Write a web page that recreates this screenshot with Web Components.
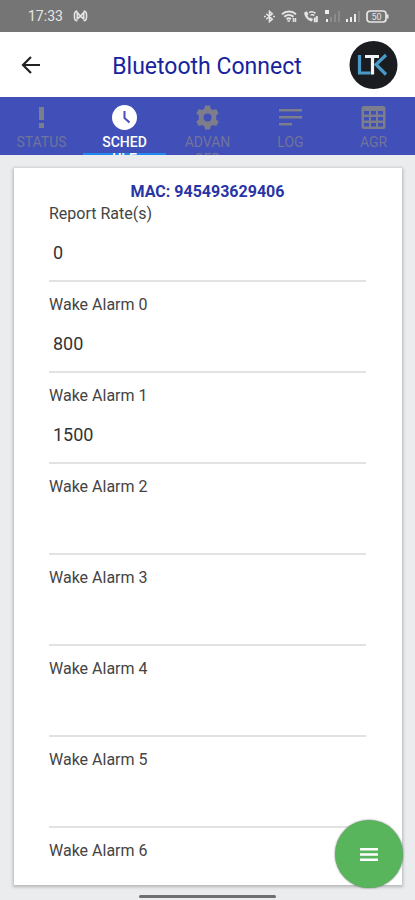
<!DOCTYPE html>
<html lang="en">
<head>
<meta charset="utf-8">
<meta name="viewport" content="width=device-width, initial-scale=1">
<title>Bluetooth Connect</title>
<style>
  html, body { height: 100%; margin: 0; }
  body { font-family: Roboto, "Liberation Sans", sans-serif; background: #ebeced; color: #333; }
</style>
</head>
<body>
<connect-app></connect-app>

<script>
const define = (name, html, setup) => customElements.define(name, class extends HTMLElement {
  constructor() {
    super();
    const t = document.createElement('template');
    t.innerHTML = html;
    this.attachShadow({ mode: 'open' }).append(t.content.cloneNode(true));
  }
  connectedCallback() { if (setup) setup(this, this.shadowRoot); }
});

define('status-bar', `
<style>
  :host { display: flex; align-items: center; justify-content: space-between; height: 32px; padding: 0 26px 0 28px; background: #757575; color: #e6e6e6; font-size: 14px; line-height: 20px; box-sizing: border-box; flex: none; }
  div { display: flex; align-items: center; gap: 10px; }
  .right { gap: 6px; }
  svg { display: block; fill: none; stroke: #e6e6e6; }
</style>
<div><span>17:33</span>
  <svg width="15" height="12" viewBox="0 0 15 12" stroke-width="1.6"><path d="M4.5 1.5C2 1 1.4 3 1.4 6s.6 5 3 4.5M10.500 1.500C13 1 13.600 3 13.600 6s-.6 5-3 4.500M4.300 9.500V2.500l3.200 3.800 3.200-3.800v7M4.500 9l3-3 3 3"/></svg>
</div>
<div class="right">
  <svg width="11" height="13" viewBox="0 0 12 14" stroke-width="1.700"><path d="M2.500 4l6.500 6-3 2.500v-11L9 4l-6.500 6M0 7h2M10 7h2"/></svg>
  <svg width="16" height="13" viewBox="0 0 16 13" stroke-width="1.900"><path d="M1 4.200c4-3.600 10-3.600 14 0M3.300 6.800c2.700-2.400 6.500-2.400 9.200 0M5.600 9.300c1.300-1.200 3-1.200 4.300 0"/><path d="M6.500 11h2.500M12.500 8v4M14.500 8v4" stroke-width="1.500"/></svg>
  <svg width="16" height="13" viewBox="0 0 17 13" stroke-width="1.600"><path d="M1.500 2.500C2 7 5 10.500 9 11.500l1.500-2-2.500-1.500-1.300.7C5.500 7.500 4.800 6.500 4.500 5.200L5.500 4 4 1.300z" fill="#e6e6e6" stroke-width=".6"/><path d="M6.500 2.200c2-1 5-.6 6.700 1M8 5c1.500-.7 3-.5 4 .5"/><path d="M12.500 7.500v5M14.700 6v6.500" stroke-width="2"/></svg>
  <svg width="15" height="12" viewBox="0 0 15 12"><path fill="#eee" stroke="none" d="M0 0h4v4H0zM1 9h2v3H1z"/><path fill="#8c8c8c" stroke="none" d="M5 7h2v5H5zM9 4h2v8H9zM13 1h2v11h-2z"/></svg>
  <svg width="14" height="12" viewBox="0 0 14 12"><path fill="#eee" stroke="none" d="M0 9h2v3H0zM4 7h2v5H4zM8 4h2v8H8z"/><path fill="#8c8c8c" stroke="none" d="M12 1h2v11h-2z"/></svg>
  <svg width="23" height="13" viewBox="0 0 23 13" stroke-width="1.700"><rect x="1" y="1" width="19" height="11" rx="3"/><path d="M21.500 4.500v4" stroke-width="2"/><text x="10.500" y="9.500" font-size="9" text-anchor="middle" fill="#e6e6e6" stroke="none">50</text></svg>
</div>`);

define('app-header', `
<style>
  :host { display: grid; grid-template-columns: 49px 1fr 49px; align-items: center; height: 65px; padding: 0 17px 0 16px; background: #fff; flex: none; box-sizing: border-box; }
  h1 { margin: 0; padding-top: 4px; font-size: 23px; line-height: 32px; font-weight: 400; color: #17239d; text-align: center; white-space: nowrap; }
  button { border: 0; background: none; padding: 4px; width: 32px; height: 32px; cursor: pointer; }
  svg { display: block; }
</style>
<button aria-label="Back"><svg width="22" height="24" viewBox="0 0 22 24" fill="none" stroke="#222" stroke-width="2.200"><path d="M20 12H3M11 4l-8 8 8 8"/></svg></button>
<h1><slot></slot></h1>
<svg width="49" height="48" viewBox="0 0 49 48" role="img" aria-label="LTK logo"><circle cx="24.500" cy="24" r="24" fill="#1b1c20"/><g fill="none" stroke-width="3.200"><path stroke="#489bc9" d="M10.500 14v18h11M37 14l-10 9.500L37 33.500"/><path stroke="#f2f5f7" d="M16 15.500h14M23.500 15v18.500"/></g></svg>`);

const icons = {
  status: '<path d="M10 2h5v13h-5zM10 18h5v5h-5z"/>',
  clock: '<circle cx="12.500" cy="12.500" r="12.500"/><path d="M12.500 6v7l5 4.500" fill="none" stroke="#4650b6" stroke-width="2"/>',
  gear: '<path fill-rule="evenodd" d="M10 .5h5l.7 3.300 2.300 1.300 3.200-1.100 2.500 4.300-2.500 2.300v3.800l2.500 2.300-2.500 4.300-3.200-1.100-2.300 1.300-.7 3.300h-5l-.7-3.300L7 19.900 3.800 21l-2.500-4.300 2.500-2.300v-3.800L1.300 8.300 3.800 4 7 5.100l2.300-1.300zM12.500 8.500a4 4 0 100 8 4 4 0 000-8z"/>',
  log: '<path d="M1 4h23v2.500H1zM1 11h23v2.500H1zM1 18h13v2.500H1z"/>',
  grid: '<path fill-rule="evenodd" d="M3 1h19q2.500 0 2.500 2.500v18Q24.500 24 22 24H3Q.5 24 .5 21.500v-18Q.5 1 3 1zM3 6v3.500h5V6zm7 0v3.500h5V6zm7 0v3.500h5V6zM3 12v3.500h5V12zm7 0v3.500h5V12zm7 0v3.500h5V12zM3 18v3.500h5V18zm7 0v3.500h5V18zm7 0v3.500h5V18z"/>'
};

define('nav-tab', `
<style>
  :host { display: block; flex: 1 1 0; min-width: 0; }
  button { display: flex; flex-direction: column; align-items: center; gap: 4px; width: 100%; height: 58px; padding: 8px 15px 0; border: 0; background: none; color: #70749a; font: 400 14px/17px Roboto, "Liberation Sans", sans-serif; overflow: hidden; cursor: pointer; }
  :host([active]) button { color: #fff; background: linear-gradient(#2186ee, #2186ee) bottom / 100% 2px no-repeat; }
  span { word-break: break-all; text-align: center; width: 100%; }
  :host([active]) span { font-weight: 500; }
  svg { fill: #7c7e8c; flex: none; }
  :host([active]) svg { fill: #fff; }
</style>
<button role="tab"><svg width="25" height="25" viewBox="0 0 25 25"></svg><span><slot></slot></span></button>`,
(el, root) => {
  root.querySelector('svg').innerHTML = icons[el.getAttribute('icon')];
  root.querySelector('button').setAttribute('aria-selected', el.hasAttribute('active'));
});

define('tab-bar', `
<style>:host { display: flex; height: 58px; background: #414fb8; flex: none; overflow: hidden; }</style>
<slot></slot>`, el => el.setAttribute('role', 'tablist'));

define('alarm-field', `
<style>
  :host { display: block; }
  label { display: block; font-size: 16px; line-height: 22px; color: #444; }
  input { display: block; box-sizing: border-box; width: 100%; height: 57px; margin: 0 0 12px; padding: 0 4px 0; border: 0; border-bottom: 2px solid #e2e2e2; border-radius: 0; outline: 0; background: none; color: #333; font: 400 18px/24px Roboto, "Liberation Sans", sans-serif; }
</style>
<label for="value"></label><input id="value" type="text" inputmode="numeric">`,
(el, root) => {
  root.querySelector('label').textContent = el.getAttribute('label');
  root.querySelector('input').value = el.getAttribute('value') || '';
});

define('schedule-card', `
<style>
  :host { display: block; flex: 1; min-height: 0; overflow-y: auto; scrollbar-width: none; box-sizing: border-box; padding: 13px 36px 0 35px; background: #fff; box-shadow: 0 1px 3px 1px #b4b6b8; }
  h2 { margin: 0; font-size: 16px; line-height: 22px; font-weight: 700; color: #2935a5; text-align: center; }
</style>
<h2><slot name="title"></slot></h2><slot></slot>`);

define('menu-fab', `
<style>
  :host { position: fixed; right: 12px; bottom: 12px; }
  button { display: grid; place-items: center; width: 68px; height: 68px; padding: 0; border: 0; border-radius: 50%; background: #58b55c; box-shadow: 0 0 2px #666; cursor: pointer; }
</style>
<button aria-label="Menu"><svg width="18" height="13" viewBox="0 0 18 13" fill="#fff"><path d="M0 0h18v2.500H0zM0 5.200h18v2.500H0zM0 10.500h18V13H0z"/></svg></button>`);

define('home-bar', `
<style>
  :host { display: flex; justify-content: center; align-items: center; height: 7px; flex: none; }
  div { width: 33%; height: 3px; border-radius: 2px; background: #6d6f71; }
</style><div></div>`);

define('connect-app', `
<style>
  :host { display: flex; flex-direction: column; height: 100vh; }
  main { display: flex; flex-direction: column; flex: 1; min-height: 0; padding: 13px 13px 8px 14px; }
</style>
<status-bar></status-bar>
<app-header>Bluetooth Connect</app-header>
<tab-bar>
  <nav-tab icon="status">STATUS</nav-tab>
  <nav-tab icon="clock" active>SCHEDULE</nav-tab>
  <nav-tab icon="gear">ADVANCED</nav-tab>
  <nav-tab icon="log">LOG</nav-tab>
  <nav-tab icon="grid">AGR</nav-tab>
</tab-bar>
<main>
  <schedule-card>
    <span slot="title">MAC: 945493629406</span>
    <alarm-field label="Report Rate(s)" value="0"></alarm-field>
    <alarm-field label="Wake Alarm 0" value="800"></alarm-field>
    <alarm-field label="Wake Alarm 1" value="1500"></alarm-field>
    <alarm-field label="Wake Alarm 2"></alarm-field>
    <alarm-field label="Wake Alarm 3"></alarm-field>
    <alarm-field label="Wake Alarm 4"></alarm-field>
    <alarm-field label="Wake Alarm 5"></alarm-field>
    <alarm-field label="Wake Alarm 6"></alarm-field>
  </schedule-card>
</main>
<home-bar></home-bar>
<menu-fab></menu-fab>`);
</script>
</body>
</html>
